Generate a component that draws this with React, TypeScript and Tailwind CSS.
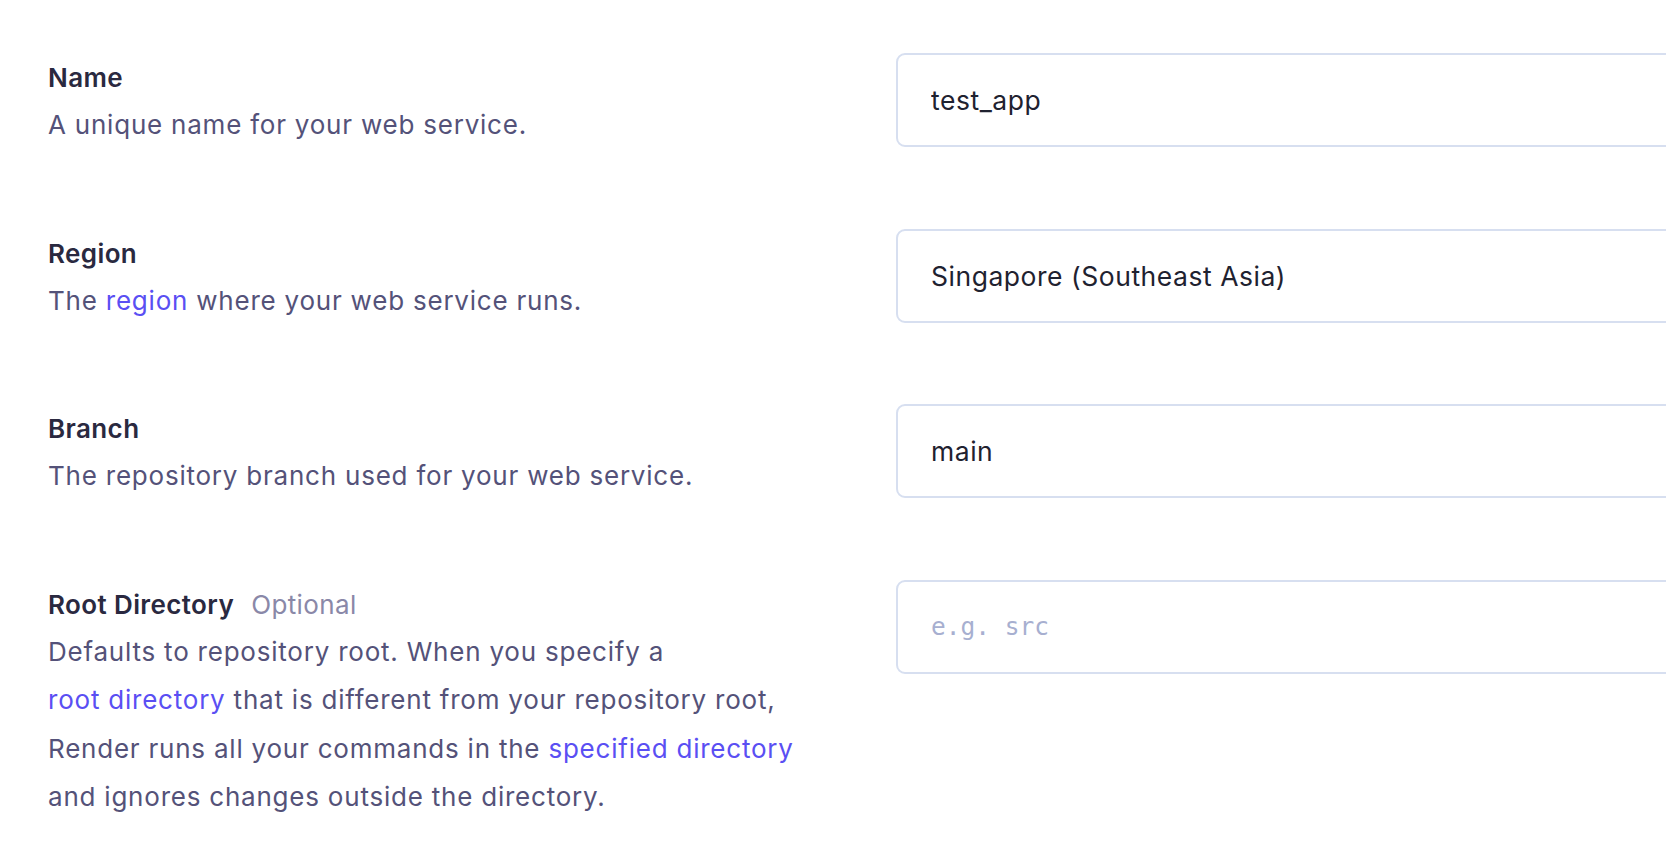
import React from "react";

type Field = {
  label: string;
  optional?: boolean;
  description: React.ReactNode;
  value?: string;
  placeholder?: string;
};

const Link = ({ children }: { children: React.ReactNode }) => (
  <a href="#" className="text-[#5a4ff3]">
    {children}
  </a>
);

const fields: Field[] = [
  {
    label: "Name",
    description: "A unique name for your web service.",
    value: "test_app",
  },
  {
    label: "Region",
    description: (
      <>
        The <Link>region</Link> where your web service runs.
      </>
    ),
    value: "Singapore (Southeast Asia)",
  },
  {
    label: "Branch",
    description: "The repository branch used for your web service.",
    value: "main",
  },
  {
    label: "Root Directory",
    optional: true,
    description: (
      <>
        Defaults to repository root. When you specify a
        <br />
        <Link>root directory</Link> that is different from your repository root,
        <br />
        Render runs all your commands in the <Link>specified directory</Link>
        <br />
        and ignores changes outside the directory.
      </>
    ),
    placeholder: "e.g. src",
  },
];

export default function App() {
  return (
    <main className="min-h-screen overflow-hidden bg-white font-['Inter',sans-serif]">
      <div className="flex flex-col gap-[79px] pl-[48px] pt-[53px]">
        {fields.map((f) => (
          <div key={f.label} className="flex items-start">
            <div className="w-[800px] shrink-0 pt-[2px]">
              <div className="flex items-baseline gap-[17px] text-[26px] leading-[46px] tracking-[0.015em]">
                <span className="font-semibold text-[#2a2940]">{f.label}</span>
                {f.optional && <span className="text-[#8a88a8]">Optional</span>}
              </div>
              <p className="whitespace-nowrap text-[26px] leading-[48.5px] tracking-[0.03em] text-[#545279]">
                {f.description}
              </p>
            </div>
            <div className="ml-[48px] w-[900px] shrink-0">
              {f.placeholder ? (
                <input
                  readOnly
                  placeholder={f.placeholder}
                  className="h-[94px] w-full rounded-[9px] border-2 border-[#d7dff0] bg-white pl-[33px] font-['DejaVu_Sans_Mono',monospace] text-[24.5px] text-[#1f2230] outline-none placeholder:text-[#a7afd0]"
                />
              ) : (
                <input
                  readOnly
                  value={f.value}
                  className="h-[94px] w-full rounded-[9px] border-2 border-[#d7dff0] bg-white pl-[33px] text-[26.5px] tracking-[0.02em] text-[#1f2230] outline-none"
                />
              )}
            </div>
          </div>
        ))}
      </div>
    </main>
  );
}
